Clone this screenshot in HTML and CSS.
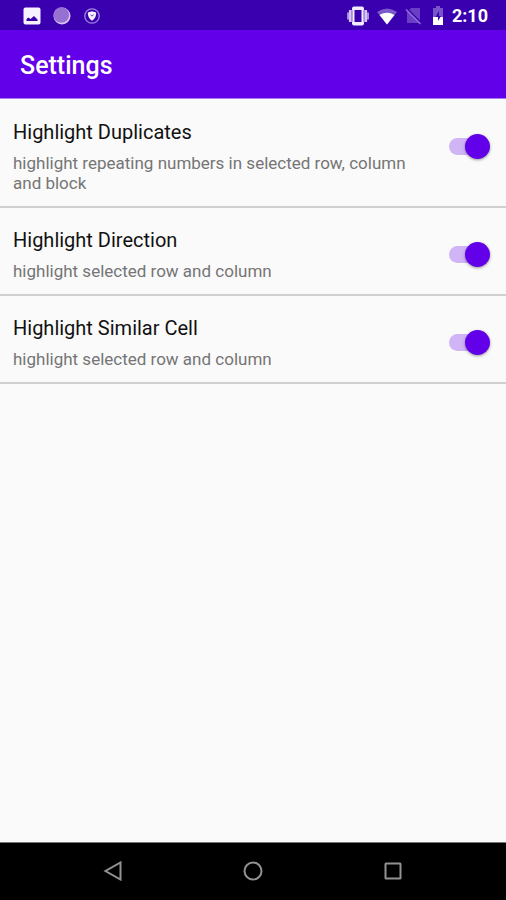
FILE: index.html
```html
<!DOCTYPE html>
<html lang="en">
<head>
<meta charset="utf-8">
<meta name="viewport" content="width=device-width, initial-scale=1">
<title>Settings</title>
<link rel="stylesheet" href="styles.css">
</head>
<body>
<div class="status-bar">
  <div class="status-group notifications">
    <svg width="18" height="18" viewBox="0 0 18 18" aria-hidden="true"><rect x="0.5" y="0.5" width="17" height="17" rx="2" fill="#f7f2ff"/><path d="M3.500 14v-2l2-1.500 2 1.500 3.500-3 3.500 3.500V14z" fill="#3a00ae"/></svg>
    <svg width="18" height="18" viewBox="0 0 18 18" aria-hidden="true"><circle cx="9" cy="9" r="8.5" fill="#d8c6f2"/><circle cx="8.3" cy="8" r="7.800" fill="#9670d2"/></svg>
    <svg width="18" height="18" viewBox="0 0 18 18" aria-hidden="true"><circle cx="9" cy="9" r="7.2" fill="none" stroke="#a287df" stroke-width="1.3"/><path d="M9 4.200 13.200 5.600c0 4-1.400 6.400-4.200 8.200-2.800-1.800-4.200-4.200-4.200-8.200z" fill="#f5efff"/><path d="m7.600 7.700 1.400 1.500 1.600-1.800" fill="none" stroke="#6840c2"/></svg>
  </div>
  <div class="status-group system">
    <svg width="22" height="20" viewBox="0 0 22 20" aria-hidden="true"><path d="M1 6.500v7M21 6.500v7" stroke="#a58bdc" stroke-width="2"/><path d="M3.300 4v12M18.700 4v12" stroke="#d5c6f5" stroke-width="2.800"/><rect x="5" y="0.500" width="12" height="19" rx="2" fill="#f3ecff"/><path d="M5.300 4v12M16.700 4v12" stroke="#ab92e2"/><rect x="7.500" y="4" width="7" height="12" fill="#3a00ae"/></svg>
    <svg width="20" height="18" viewBox="0 0 20 18" aria-hidden="true"><path d="M0 5Q10-2 20 5L10 17.500z" fill="#7d5acb"/><path d="M2.500 8Q10 3.500 17.500 8L10 17.500z" fill="#fff"/></svg>
    <svg class="sim" width="17" height="18" viewBox="0 0 17 18" aria-hidden="true"><path d="M6 1h9v15H2V5z" fill="#6a3fc5"/><path d="m2.500 2 14 14" stroke="#3a00ae" stroke-width="1.500"/><path d="m1 2.500 14.500 14.500" stroke="#8e70d4" stroke-width="1.500"/></svg>
    <svg width="12" height="20" viewBox="0 0 12 20" aria-hidden="true"><path d="M4 0h4v2h3v9H1V2h3z" fill="#7854ca"/><path d="M1 11h10v8H1z" fill="#fff"/><path d="M7 5 3.500 11H6v4l3-5H7z" fill="#3a00ae"/></svg>
    <time class="clock">2:10</time>
  </div>
</div>
<header class="app-bar"><h1>Settings</h1></header>
<main class="settings">
  <label class="setting" for="duplicates">
    <span class="copy"><span class="name">Highlight Duplicates</span><span class="detail">highlight repeating numbers in selected row, column and block</span></span>
    <input class="switch" id="duplicates" type="checkbox" role="switch" checked>
  </label>
  <label class="setting" for="direction">
    <span class="copy"><span class="name">Highlight Direction</span><span class="detail">highlight selected row and column</span></span>
    <input class="switch" id="direction" type="checkbox" role="switch" checked>
  </label>
  <label class="setting" for="similar">
    <span class="copy"><span class="name">Highlight Similar Cell</span><span class="detail">highlight selected row and column</span></span>
    <input class="switch" id="similar" type="checkbox" role="switch" checked>
  </label>
</main>
<nav class="nav-bar" aria-label="System navigation">
  <button type="button" aria-label="Back"><svg width="20" height="20" viewBox="0 0 20 20"><path d="M17.500 1.500v17L2.500 10z"/></svg></button>
  <button type="button" aria-label="Home"><svg width="20" height="20" viewBox="0 0 20 20"><circle cx="10" cy="10" r="8.500"/></svg></button>
  <button type="button" aria-label="Recent apps"><svg width="20" height="20" viewBox="0 0 20 20"><rect x="2.500" y="2.500" width="15" height="15" rx="0.500"/></svg></button>
</nav>
</body>
</html>
```
FILE: styles.css
```css
* {
  box-sizing: border-box;
}

body {
  margin: 0;
  min-height: 100vh;
  display: flex;
  flex-direction: column;
  background: #fafafa;
  font-family: Roboto, "Liberation Sans", sans-serif;
}

.status-bar {
  height: 30px;
  padding: 1px 18px 0 23px;
  display: flex;
  align-items: center;
  justify-content: space-between;
  background: #3a00b0;
  color: #fff;
}

.status-group {
  display: flex;
  align-items: center;
}

.notifications {
  gap: 12px;
}

.system {
  gap: 8px;
}

.sim {
  margin-right: 2px;
}

.clock {
  font-size: 18px;
  line-height: 20px;
  font-weight: 700;
}

.app-bar {
  height: 69px;
  padding: 4px 20px 0;
  display: flex;
  align-items: center;
  background: #6200ea;
  color: #fff;
  border-bottom: 1px solid #a77bee;
}

.app-bar h1 {
  margin: 0;
  font-size: 25px;
  line-height: 32px;
  font-weight: 500;
}

.settings {
  flex: 1;
  padding-top: 1px;
}

.setting {
  display: flex;
  align-items: flex-start;
  justify-content: space-between;
  gap: 24px;
  padding: 20px 16px 13px 13px;
  border-bottom: 2px solid #d0d0d0;
}

.copy {
  display: flex;
  flex-direction: column;
  gap: 9px;
}

.name {
  color: #111;
  font-size: 20px;
  line-height: 24px;
}

.detail {
  color: #757575;
  font-size: 17px;
  line-height: 20px;
}

.switch {
  appearance: none;
  flex: none;
  width: 41px;
  height: 25px;
  margin: 14px 0 0;
  display: flex;
  align-items: center;
}

.switch::before {
  content: "";
  width: 36px;
  height: 17px;
  border-radius: 9px;
  background: #d0b5f6;
}

.switch::after {
  content: "";
  width: 25px;
  height: 25px;
  margin-left: -20px;
  border-radius: 50%;
  background: #6200ea;
  box-shadow: 0 1px 3px rgba(0, 0, 0, 0.4);
}

.switch:not(:checked)::before {
  background: #bdbdbd;
}

.switch:not(:checked)::after {
  margin-left: -36px;
  background: #f1f1f1;
}

.nav-bar {
  height: 58px;
  padding: 0 43px 2px;
  display: grid;
  grid-template-columns: repeat(3, 1fr);
  align-items: center;
  background: #000;
  border-top: 1px solid #777;
}

.nav-bar button {
  height: 48px;
  padding: 0;
  border: 0;
  background: none;
  display: flex;
  align-items: center;
  justify-content: center;
}

.nav-bar svg {
  fill: none;
  stroke: #929292;
  stroke-width: 2;
}
```
